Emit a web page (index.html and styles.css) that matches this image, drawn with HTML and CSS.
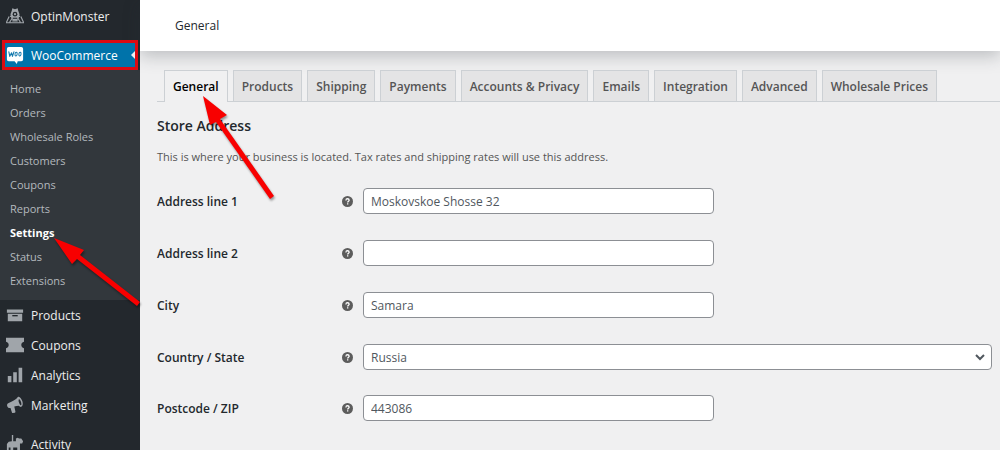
FILE: index.html
```html
<!DOCTYPE html>
<html lang="en">
<head>
<meta charset="utf-8">
<meta name="viewport" content="width=device-width, initial-scale=1">
<title>General – WooCommerce settings</title>
<link rel="stylesheet" href="styles.css">
</head>
<body>
<div class="layout">
  <nav class="sidebar" aria-label="Admin menu">
    <a class="menu-item" href="#">
      <svg class="menu-icon" viewBox="0 0 20 20" aria-hidden="true"><g fill="none" stroke="#a0a5aa" stroke-width="1.300"><path d="M4.500 10.500h11M5.500 8h9"/><path d="M3.500 10.500l-3 6.500M16.500 10.500l3 6.500M0 17.500h20M4 17l2.500-4M16 17l-2.500-4M7 15.500h6"/></g><path fill="#a0a5aa" d="M7 1.500l3 1 3-1 .5 2.500L15 8l-1 5-2 2H8l-2-2-1-5 1.500-4z"/><circle cx="10" cy="8" r="2.600" fill="#23282d"/><circle cx="10" cy="8" r="1.200" fill="#a0a5aa"/><path d="M7.500 12.500h5" stroke="#23282d" stroke-width="1.200"/></svg>
      <span>OptinMonster</span>
    </a>
    <a class="menu-item menu-current" href="#">
      <svg class="menu-icon" viewBox="0 0 20 20" aria-hidden="true"><path fill="#fff" d="M3 1h14a2 2 0 0 1 2 2v12a2 2 0 0 1-2 2h-4l-1 3-2.500-3H3a2 2 0 0 1-2-2V3a2 2 0 0 1 2-2z"/><path d="M3.200 6.500l1 5 2-4 1 4 1.600-5" fill="none" stroke="#1279ad" stroke-width="1.200" stroke-linejoin="round" stroke-linecap="round"/><ellipse cx="11.200" cy="9" rx="1.200" ry="2.100" fill="none" stroke="#1279ad" stroke-width="1.100" transform="rotate(12 11.200 9)"/><ellipse cx="15.500" cy="9" rx="1.200" ry="2.100" fill="none" stroke="#1279ad" stroke-width="1.100" transform="rotate(12 15.500 9)"/></svg>
      <span>WooCommerce</span>
    </a>
    <div class="submenu">
      <a href="#">Home</a>
      <a href="#">Orders</a>
      <a href="#">Wholesale Roles</a>
      <a href="#">Customers</a>
      <a href="#">Coupons</a>
      <a href="#">Reports</a>
      <a class="submenu-current" href="#" aria-current="page">Settings</a>
      <a href="#">Status</a>
      <a href="#">Extensions</a>
    </div>
    <a class="menu-item" href="#">
      <svg class="menu-icon" viewBox="0 0 20 20" aria-hidden="true"><path fill="#a0a5aa" d="M1 4h18v3.500H1zM2 8.500h16V17H2z"/><path fill="#23282d" d="M7 10h6v1.500H7z"/></svg>
      <span>Products</span>
    </a>
    <a class="menu-item" href="#">
      <svg class="menu-icon" viewBox="0 0 20 20" aria-hidden="true"><path fill="#a0a5aa" d="M0 2h20v4.500c-2 .5-3 1.800-3 3.500s1 3 3 3.500V18H0v-4.500c2-.5 3-1.800 3-3.500s-1-3-3-3.500z"/></svg>
      <span>Coupons</span>
    </a>
    <a class="menu-item" href="#">
      <svg class="menu-icon" viewBox="0 0 20 20" aria-hidden="true"><path fill="#a0a5aa" d="M2 11h4v7H2zM8 7h4v11H8zM14 2h4v16h-4z"/></svg>
      <span>Analytics</span>
    </a>
    <a class="menu-item" href="#">
      <svg class="menu-icon" viewBox="0 0 20 20" aria-hidden="true"><path fill="#a0a5aa" d="M18.200 5.900c.9 2.800.4 5.500-1.200 6.100-1 .3-2-.2-2.800-1.200-1.500.1-3.400.3-5 .8l1.300 5.900c.1.500-.2.900-.6 1l-2.300.3c-.4.100-.8-.2-1-.6l-1.600-5c-1.600.7-3-.1-3.600-1.700-.6-1.700 0-3.200 1.600-3.800C7.200 6.200 10.500 4 12.400 2.300c.1-.7.500-1.300 1.200-1.500 1.700-.6 3.700 2.200 4.600 5.100zm-1.600 4.400c.6-.2.700-1.800.1-3.700s-1.600-3.300-2.200-3.100-.7 1.900-.1 3.800c.6 1.800 1.600 3.200 2.200 3z"/></svg>
      <span>Marketing</span>
    </a>
    <a class="menu-item menu-spaced" href="#">
      <svg class="menu-icon" viewBox="0 0 20 20" aria-hidden="true"><path fill="#a0a5aa" d="M6.500 0h1.500v7h3V4l2-1 1.500 1H17l2 3-1 2.500h-2.500V18h-3v-4H8v4H5v-4H3v4H1v-8l2-2.500 3.500-.5z"/></svg>
      <span>Activity</span>
    </a>
  </nav>

  <div class="content">
    <header class="page-header"><h1>General</h1></header>
    <main class="page">
      <nav class="tabs" aria-label="Settings sections">
        <a class="tab tab-active" href="#" aria-current="page">General</a>
        <a class="tab" href="#">Products</a>
        <a class="tab" href="#">Shipping</a>
        <a class="tab" href="#">Payments</a>
        <a class="tab" href="#">Accounts &amp; Privacy</a>
        <a class="tab" href="#">Emails</a>
        <a class="tab" href="#">Integration</a>
        <a class="tab" href="#">Advanced</a>
        <a class="tab" href="#">Wholesale Prices</a>
      </nav>
      <h2 class="section-title">Store Address</h2>
      <p class="section-text">This is where your business is located. Tax rates and shipping rates will use this address.</p>
      <form class="fields">
        <div class="field">
          <label for="address1">Address line 1</label>
          <svg class="help" viewBox="0 0 12 12" aria-hidden="true"><circle cx="6" cy="6" r="6"/><path d="M4.300 4.800C4.300 3.500 5 3 6 3s1.800.6 1.800 1.500C7.800 5.700 6.200 5.600 6.200 7M6.200 8v1.300"/></svg>
          <input class="control" id="address1" type="text" value="Moskovskoe Shosse 32">
        </div>
        <div class="field">
          <label for="address2">Address line 2</label>
          <svg class="help" viewBox="0 0 12 12" aria-hidden="true"><circle cx="6" cy="6" r="6"/><path d="M4.300 4.800C4.300 3.500 5 3 6 3s1.800.6 1.800 1.500C7.800 5.700 6.200 5.600 6.200 7M6.200 8v1.300"/></svg>
          <input class="control" id="address2" type="text" value="">
        </div>
        <div class="field">
          <label for="city">City</label>
          <svg class="help" viewBox="0 0 12 12" aria-hidden="true"><circle cx="6" cy="6" r="6"/><path d="M4.300 4.800C4.300 3.500 5 3 6 3s1.800.6 1.800 1.500C7.800 5.700 6.200 5.600 6.200 7M6.200 8v1.300"/></svg>
          <input class="control" id="city" type="text" value="Samara">
        </div>
        <div class="field">
          <label for="country">Country / State</label>
          <svg class="help" viewBox="0 0 12 12" aria-hidden="true"><circle cx="6" cy="6" r="6"/><path d="M4.300 4.800C4.300 3.500 5 3 6 3s1.800.6 1.800 1.500C7.800 5.700 6.200 5.600 6.200 7M6.200 8v1.300"/></svg>
          <div class="select-wrap">
            <select class="control" id="country"><option>Russia</option></select>
            <svg class="chevron" viewBox="0 0 10 10" aria-hidden="true"><path d="M1 3l4 4 4-4"/></svg>
          </div>
        </div>
        <div class="field">
          <label for="postcode">Postcode / ZIP</label>
          <svg class="help" viewBox="0 0 12 12" aria-hidden="true"><circle cx="6" cy="6" r="6"/><path d="M4.300 4.800C4.300 3.500 5 3 6 3s1.800.6 1.800 1.500C7.800 5.700 6.200 5.600 6.200 7M6.200 8v1.300"/></svg>
          <input class="control" id="postcode" type="text" value="443086">
        </div>
      </form>
    </main>
  </div>
</div>
<svg class="annotations" width="300" height="320" viewBox="0 0 300 320" aria-hidden="true">
  <path d="M203 96L227 115 220 119 274 196 270 199 216 122 210 125z"/>
  <path d="M54 238L84 250 80 255 140 302 137 306 77 259 72 264z"/>
</svg>
</body>
</html>
```
FILE: styles.css
```css
* { box-sizing: border-box; }

body {
  margin: 0;
  background: #f0f0f1;
  color: #23282d;
  font-family: "Open Sans", "Noto Sans", sans-serif;
  font-size: 12px;
  overflow: hidden;
}

a { color: inherit; text-decoration: none; }

.layout {
  display: grid;
  grid-template-columns: 140px 1fr;
  height: 100vh;
}

/* Sidebar */
.sidebar {
  background: #23282d;
  color: #eee;
  overflow: hidden;
  padding-top: 1px;
}

.menu-item {
  display: flex;
  align-items: center;
  gap: 7px;
  height: 30px;
  padding-left: 6px;
  white-space: nowrap;
}

.menu-icon { width: 18px; height: 18px; flex: none; }

.menu-current {
  position: relative;
  margin: 9px 2px 0;
  padding-left: 1px;
  border: 3px solid #dc0a12;
  background: #0073aa;
  color: #fff;
}

.menu-current::after {
  content: "";
  margin-left: auto;
  border: 4px solid transparent;
  border-left-width: 0;
  border-right-color: #f0f0f1;
}

.submenu {
  display: flex;
  flex-direction: column;
  padding: 7px 0 7px 10px;
  background: #32373c;
  color: #b4b9be;
  font-size: 11px;
  line-height: 24px;
}

.submenu-current { color: #fff; font-weight: 700; }

.menu-spaced { margin-top: 9px; }

/* Content */
.content { min-width: 0; }

.page-header {
  display: flex;
  align-items: center;
  height: 51px;
  padding-left: 35px;
  background: #fff;
  box-shadow: 0 5px 16px rgba(40, 48, 56, 0.26);
}

.page-header h1 { margin: 0; font-size: 12px; font-weight: 500; }

.page { padding: 19px 8px 0 17px; }

.tabs {
  display: flex;
  gap: 5px;
  margin-right: -8px;
  padding-left: 7px;
  border-bottom: 1px solid #ccd0d4;
}

.tab {
  height: 31px;
  padding: 0 8px;
  border: 1px solid #ccd0d4;
  border-bottom: 0;
  background: #e4e4e5;
  color: #555;
  font-weight: 600;
  line-height: 32px;
  white-space: nowrap;
}

.tab-active {
  margin-bottom: -1px;
  height: 32px;
  background: #f0f0f1;
  color: #000;
}

.section-title {
  margin: 14px 0 0;
  font-size: 14px;
  font-weight: 600;
  line-height: 20px;
}

.section-text {
  margin: 12px 0 0;
  color: #555;
  font-size: 11px;
  line-height: 18px;
}

.fields { padding-top: 9px; }

.field {
  display: grid;
  grid-template-columns: 185px 11px 1fr;
  align-items: center;
  height: 52px;
}

.field:last-child { height: 50px; }

.field label { font-weight: 600; }

.help { width: 11px; height: 11px; }
.help circle { fill: #5c5c5c; }
.help path { fill: none; stroke: #fff; stroke-width: 1.4; }

.control {
  width: 351px;
  height: 26px;
  margin: 0 0 0 10px;
  padding: 0 7px;
  border: 1px solid #8c8f94;
  border-radius: 4px;
  background: #fff;
  color: #50575e;
  font: inherit;
}

.select-wrap { position: relative; padding-left: 10px; }

.select-wrap .control {
  display: block;
  width: 100%;
  margin: 0;
  appearance: none;
}

.chevron {
  position: absolute;
  top: 8px;
  right: 7px;
  width: 10px;
  height: 10px;
  fill: none;
  stroke: #50575e;
  stroke-width: 2;
  pointer-events: none;
}

.annotations {
  position: absolute;
  top: 0;
  left: 0;
  fill: #f80000;
  filter: drop-shadow(1px 2px 1px rgba(0, 0, 0, 0.4));
  pointer-events: none;
}
```
